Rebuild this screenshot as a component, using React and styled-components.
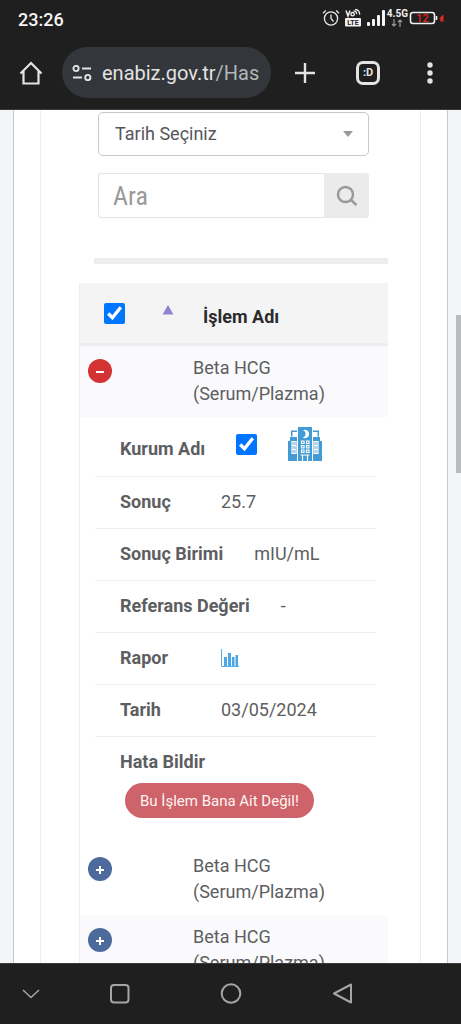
import { useState } from 'react';
import styled, { createGlobalStyle } from 'styled-components';

const DETAILS = [
  { label: 'Sonuç', value: '25.7' },
  { label: 'Sonuç Birimi', value: 'mIU/mL' },
  { label: 'Referans Değeri', value: '-' },
  { label: 'Rapor', chart: true },
  { label: 'Tarih', value: '03/05/2024' },
];

const ROWS = [1, 2, 3];

const StatusBar = () => (
  <Status>
    <Clock>23:26</Clock>
    <StatusIcons>
      <svg width="18" height="18" viewBox="0 0 18 18" fill="none" stroke="#e8e8e8" strokeWidth="1.3">
        <circle cx="9" cy="9.5" r="6.6" />
        <path d="M9 5.5v4l2.5 3M1 4.2 3.8 1.6M17 4.2l-2.8-2.6" />
      </svg>
      <svg width="18" height="18" viewBox="0 0 18 18" fill="none">
        <path d="M2 1.5 4 7l2-5.5" stroke="#f2f2f2" strokeWidth="1.5" />
        <circle cx="8.6" cy="5.2" r="1.7" stroke="#f2f2f2" strokeWidth="1.4" />
        <path d="M9.5 1.8c2 0 3.2 1.2 3.2 3.4M11 .3c3 .3 4.7 2 4.7 5.5" stroke="#f2f2f2" strokeWidth="1.2" />
        <rect x="1" y="9" width="16" height="8.5" rx="1" fill="#f2f2f2" />
        <text x="9" y="16" textAnchor="middle" fontSize="7" fontWeight="700" fill="#1f1f1f">LTE</text>
      </svg>
      <svg width="20" height="18" viewBox="0 0 20 18" fill="#f5f5f5">
        <rect x="1" y="13" width="3" height="4" rx="1" />
        <rect x="6" y="10" width="3" height="7" rx="1" />
        <rect x="11" y="6" width="3" height="11" rx="1" />
        <rect x="16" y="1" width="3" height="16" rx="1" />
      </svg>
      <Network>
        <b>4.5G</b>
        <svg width="12" height="8" viewBox="0 0 12 8" fill="none" stroke="#9a9a9a" strokeWidth="1.2">
          <path d="M3 0v7M1 5l2 2 2-2M9 8V1M7 3l2-2 2 2" />
        </svg>
      </Network>
      <svg width="35" height="14" viewBox="0 0 35 14" fill="none">
        <rect x="1.5" y="1.5" width="24" height="11" rx="2.5" stroke="#f0f0f0" strokeWidth="1.6" />
        <path d="M27.5 5v4" stroke="#f0f0f0" strokeWidth="1.6" />
        <text x="13.5" y="11" textAnchor="middle" fontSize="11" fontWeight="500" fill="#e0281c">12</text>
        <path d="M33.5 4 30 8h1.5l-.5 2.500h3.500V4z" fill="#e0281c" />
      </svg>
    </StatusIcons>
  </Status>
);

const BrowserBar = () => (
  <Toolbar>
    <IconButton aria-label="Ana sayfa">
      <svg width="24" height="24" viewBox="0 0 24 24" fill="none" stroke="#e3e3e3" strokeWidth="2.2">
        <path d="M1.5 12.5 12 2l10.5 10.5M4.5 10v12.5h15V10" />
      </svg>
    </IconButton>
    <Address>
      <svg width="20" height="16" viewBox="0 0 20 16" fill="none" stroke="#e3e3e3" strokeWidth="1.9">
        <circle cx="4" cy="3.5" r="2.6" />
        <path d="M10 3.5h9M1 12.5h9" />
        <circle cx="15.8" cy="12.5" r="2.6" />
      </svg>
      <Url>
        enabiz.gov.tr<span>/Has</span>
      </Url>
    </Address>
    <ToolbarActions>
      <IconButton aria-label="Yeni sekme">
        <svg width="22" height="22" viewBox="0 0 22 22" stroke="#e3e3e3" strokeWidth="2.4">
          <path d="M1 11h20M11 1v20" />
        </svg>
      </IconButton>
      <TabsButton aria-label="Sekmeler">:D</TabsButton>
      <IconButton aria-label="Menü">
        <svg width="20" height="22" viewBox="0 0 20 22" fill="#e3e3e3">
          <circle cx="10" cy="3" r="2.7" />
          <circle cx="10" cy="11" r="2.7" />
          <circle cx="10" cy="19" r="2.7" />
        </svg>
      </IconButton>
    </ToolbarActions>
  </Toolbar>
);

const HospitalIcon = () => (
  <svg width="34" height="35" viewBox="0 0 34 35" role="img" aria-label="Kurum">
    <g fill="#439bd3">
      <path d="M0 14h9v20H0zM25 14h9v20h-9z" />
      <path d="M10 0h14v34H10z" />
      <path d="M3 3.5h6V5H4.5v4.5H3zM31 3.5h-6V5h4.5v4.5H31z" />
      <path d="M2 10h7v4H2zM25 10h7v4h-7z" />
    </g>
    <path d="M15 3.2a4.2 4.2 0 1 1-.3 7.3 3.8 3.8 0 0 0 .3-7.3z" fill="#fff" />
    <g fill="none" stroke="#fff" strokeWidth="1.2">
      <path d="M13.5 14H16v2.5h-2.5zM18.5 14H21v2.5h-2.5zM13.5 18.5H16V21h-2.5zM18.5 18.5H21V21h-2.5zM13.5 23H16v2.5h-2.5zM18.5 23H21v2.5h-2.5z" />
      <path d="M4 14.5h4v4H4zM4 18.5h4v4H4zM4 22.5h4v4H4zM6 14.5v12" />
      <path d="M26 14.5h4v4h-4zM26 18.5h4v4h-4zM26 22.5h4v4h-4zM28 14.5v12" />
      <path d="M12.5 28h9M14.5 28v6.5M19.5 28v6.5" />
    </g>
  </svg>
);

const ChartIcon = () => (
  <svg width="18" height="18" viewBox="0 0 18 18">
    <path d="M.5 0v17.5H18" fill="none" stroke="#55aee6" />
    <path d="M3 8h3v9H3zM7 4h3v13H7zM11 8h2.5v9H11zM14.5 6H17v11h-2.5z" fill="#4ba6e2" />
  </svg>
);

const ResultDetails = () => (
  <DetailList>
    <DetailItem $first>
      <label htmlFor="kurum">Kurum Adı</label>
      <DetailValue>
        <Checkbox id="kurum" defaultChecked />
        <HospitalIcon />
      </DetailValue>
    </DetailItem>
    {DETAILS.map(({ label, value, chart }) => (
      <DetailItem key={label}>
        <b>{label}</b>
        <DetailValue>{chart ? <ChartIcon /> : value}</DetailValue>
      </DetailItem>
    ))}
    <DetailItem $last>
      <b>Hata Bildir</b>
      <ReportButton>Bu İşlem Bana Ait Değil!</ReportButton>
    </DetailItem>
  </DetailList>
);

const ResultRow = ({ striped, open, onToggle }) => (
  <>
    <Row $striped={striped}>
      <td>
        <ToggleButton $open={open} onClick={onToggle} aria-label="Detay">
          <svg width="10" height="10" viewBox="0 0 10 10" stroke="#fff" strokeWidth="2">
            <path d={open ? 'M1 6h8' : 'M1 6h8M5 2v8'} />
          </svg>
        </ToggleButton>
      </td>
      <td>
        Beta HCG
        <br />
        (Serum/Plazma)
      </td>
    </Row>
    {open && (
      <tr>
        <DetailCell colSpan={2}>
          <ResultDetails />
        </DetailCell>
      </tr>
    )}
  </>
);

export default function App() {
  const [openRow, setOpenRow] = useState(1);

  return (
    <Screen>
      <GlobalStyle />
      <StatusBar />
      <BrowserBar />
      <Viewport>
        <Sheet>
          <Panel>
            <Filters>
              <SelectBox>
                <select aria-label="Tarih" defaultValue="">
                  <option value="">Tarih Seçiniz</option>
                </select>
                <svg width="10" height="6" viewBox="0 0 10 6" fill="#999">
                  <path d="M0 0h10L5 6z" />
                </svg>
              </SelectBox>
              <SearchBox>
                <input type="text" placeholder="Ara" aria-label="Ara" />
                <button aria-label="Ara">
                  <svg width="22" height="22" viewBox="0 0 22 22" fill="none" stroke="#999" strokeWidth="2.4">
                    <circle cx="9.5" cy="9.5" r="7.5" />
                    <path d="m15 15 5.5 5" />
                  </svg>
                </button>
              </SearchBox>
            </Filters>
            <Divider />
            <Table>
              <thead>
                <tr>
                  <th>
                    <HeadTools>
                      <Checkbox aria-label="Tümünü seç" defaultChecked />
                      <svg width="12" height="16" viewBox="0 0 12 16" fill="#8f83d3">
                        <path d="M6 2l5.5 9.5H.5z" />
                      </svg>
                    </HeadTools>
                  </th>
                  <th>İşlem Adı</th>
                </tr>
              </thead>
              <tbody>
                {ROWS.map((id) => (
                  <ResultRow
                    key={id}
                    striped={id % 2 === 1}
                    open={openRow === id}
                    onToggle={() => setOpenRow(openRow === id ? null : id)}
                  />
                ))}
              </tbody>
            </Table>
          </Panel>
        </Sheet>
        <ScrollThumb />
      </Viewport>
      <NavBar>
        <IconButton aria-label="Gizle">
          <svg width="22" height="22" viewBox="0 0 22 22" fill="none" stroke="#a5a5a5" strokeWidth="1.6">
            <path d="m3 7 8 7.5L19 7" />
          </svg>
        </IconButton>
        <NavGroup>
          <IconButton aria-label="Son uygulamalar">
            <svg width="22" height="22" viewBox="0 0 22 22" fill="none" stroke="#a5a5a5" strokeWidth="2">
              <rect x="2" y="2" width="17.5" height="17.5" rx="3" />
            </svg>
          </IconButton>
          <IconButton aria-label="Ana ekran">
            <svg width="22" height="22" viewBox="0 0 22 22" fill="none" stroke="#a5a5a5" strokeWidth="2">
              <circle cx="11" cy="10.5" r="9.3" />
            </svg>
          </IconButton>
          <IconButton aria-label="Geri">
            <svg width="22" height="22" viewBox="0 0 22 22" fill="none" stroke="#a5a5a5" strokeWidth="2" strokeLinejoin="round">
              <path d="M20 1.5v18l-17-9z" />
            </svg>
          </IconButton>
        </NavGroup>
      </NavBar>
    </Screen>
  );
}

const GlobalStyle = createGlobalStyle`
  * {
    box-sizing: border-box;
  }
  body {
    margin: 0;
    font-family: Roboto, "Liberation Sans", sans-serif;
    color: #5d5e61;
  }
  button, input, select {
    margin: 0;
    font-family: inherit;
  }
  svg {
    display: block;
    flex-shrink: 0;
  }
`;

const Screen = styled.div`
  display: flex;
  flex-direction: column;
  height: 100vh;
  overflow: hidden;
`;

const Status = styled.div`
  display: flex;
  justify-content: space-between;
  align-items: center;
  height: 38px;
  padding: 0 17px 2px 18px;
  background: #1f1f1f;
`;

const Clock = styled.span`
  padding-top: 2px;
  font-size: 18px;
  font-weight: 500;
  color: #f5f5f5;
`;

const StatusIcons = styled.div`
  display: flex;
  align-items: center;
  gap: 4px;
`;

const Network = styled.div`
  display: flex;
  flex-direction: column;
  align-items: center;
  margin: 0 -3px;
  b {
    font-size: 10px;
    line-height: 10px;
    color: #f0f0f0;
  }
`;

const Toolbar = styled.header`
  display: flex;
  align-items: center;
  height: 72px;
  padding: 0 21px 2px 19px;
  background: #1f1f1f;
  border-bottom: 1px solid #3a3a3a;
`;

const IconButton = styled.button`
  display: flex;
  padding: 0;
  border: none;
  background: none;
  cursor: pointer;
`;

const Address = styled.div`
  display: flex;
  flex: 1;
  align-items: center;
  gap: 10px;
  min-width: 0;
  height: 51px;
  margin: 0 23px 0 19px;
  padding: 0 9px 0 10px;
  border-radius: 26px;
  background: #33363a;
`;

const Url = styled.span`
  overflow: hidden;
  white-space: nowrap;
  font-size: 20px;
  color: #e3e3e3;
  span {
    color: #b4b6b9;
  }
`;

const ToolbarActions = styled.div`
  display: flex;
  align-items: center;
  gap: 40px;
`;

const TabsButton = styled.button`
  width: 24px;
  height: 24px;
  padding: 0;
  border: 3px solid #e3e3e3;
  border-radius: 7px;
  background: none;
  color: #e3e3e3;
  font-size: 11px;
  font-weight: 700;
  cursor: pointer;
`;

const Viewport = styled.main`
  position: relative;
  flex: 1;
  min-height: 0;
  overflow: hidden;
  padding: 0 13px;
  background: #f3f5f8;
`;

const Sheet = styled.div`
  padding: 0 26px;
  border: solid #c6c9cb;
  border-width: 0 1px;
  background: #fff;
`;

const Panel = styled.section`
  padding: 2px 32px 0 38px;
  border: solid #eeeeee;
  border-width: 0 1px;
`;

const Filters = styled.div`
  display: flex;
  flex-direction: column;
  gap: 17px;
  padding: 0 19px;
`;

const SelectBox = styled.div`
  display: grid;
  align-items: center;
  select,
  svg {
    grid-area: 1 / 1;
  }
  select {
    appearance: none;
    height: 44px;
    padding: 0 16px 2px;
    border: 1px solid #c5c8cb;
    border-radius: 5px;
    background: #fff;
    color: #55565a;
    font-size: 18px;
  }
  svg {
    justify-self: end;
    margin-right: 16px;
    pointer-events: none;
  }
`;

const SearchBox = styled.div`
  display: flex;
  height: 45px;
  input {
    flex: 1;
    min-width: 0;
    padding: 0 14px;
    border: 1px solid #e4e4e4;
    border-right: none;
    border-radius: 3px 0 0 3px;
    font-family: "Roboto Condensed", Roboto, sans-serif;
    font-size: 26px;
  }
  input::placeholder {
    color: #999;
  }
  button {
    display: flex;
    align-items: center;
    justify-content: center;
    width: 45px;
    padding: 0;
    border: none;
    border-radius: 0 3px 3px 0;
    background: #ebebeb;
    cursor: pointer;
  }
`;

const Divider = styled.hr`
  height: 6px;
  margin: 40px 0 19px 15px;
  border: none;
  background: #ededed;
`;

const Table = styled.table`
  width: 100%;
  border-collapse: separate;
  border-spacing: 0;
  border-left: 1px solid #eeeff1;
  font-size: 18px;
  line-height: 26px;
  th {
    height: 63px;
    padding: 8px 20px 0;
    border-bottom: 3px solid #ebedef;
    background: #f4f4f4;
    color: #2b2b2d;
    text-align: left;
  }
  th:first-child {
    width: 103px;
    padding: 0 9px 0 24px;
  }
`;

const HeadTools = styled.div`
  display: flex;
  justify-content: space-between;
`;

const Checkbox = styled.input.attrs({ type: 'checkbox' })`
  width: 21px;
  height: 21px;
  accent-color: #0075ff;
`;

const Row = styled.tr`
  background: ${({ $striped }) => ($striped ? '#fafafc' : '#fff')};
  td {
    padding: 9px 10px 10px;
    vertical-align: top;
  }
  td:first-child {
    padding: 13px 8px;
  }
`;

const ToggleButton = styled.button`
  display: flex;
  align-items: center;
  justify-content: center;
  width: 24px;
  height: 24px;
  padding: 0;
  border: none;
  border-radius: 50%;
  background: ${({ $open }) => ($open ? '#d33333' : '#4c6a9b')};
  cursor: pointer;
`;

const DetailCell = styled.td`
  padding: 10px 12px 0 15px;
`;

const DetailList = styled.ul`
  margin: 0;
  padding: 0;
  list-style: none;
`;

const DetailItem = styled.li`
  display: flex;
  flex-direction: ${({ $last }) => ($last ? 'column' : 'row')};
  align-items: ${({ $last }) => ($last ? 'flex-start' : 'flex-end')};
  gap: ${({ $last }) => ($last ? '8px' : '31px')};
  padding: ${({ $first, $last }) => ($first ? '0 25px 14px' : $last ? '12px 25px 26px' : '12px 25px 13px')};
  border-bottom: ${({ $last }) => ($last ? 'none' : '1px solid #ededee')};
  b,
  label {
    min-width: 70px;
    font-weight: 700;
  }
`;

const DetailValue = styled.div`
  display: flex;
  align-items: center;
  gap: 31px;
  min-height: 26px;
`;

const ReportButton = styled.button`
  height: 35px;
  margin-left: 5px;
  padding: 0 15px;
  border: none;
  border-radius: 18px;
  background: #ce636b;
  color: #fff3f0;
  font-size: 15px;
  cursor: pointer;
`;

// overlay scrollbar of the mobile browser
const ScrollThumb = styled.div`
  position: absolute;
  top: 24%;
  right: 0;
  width: 5px;
  height: 158px;
  background: #b9bbbd;
`;

const NavBar = styled.nav`
  display: grid;
  grid-template-columns: 1fr auto 1fr;
  align-items: center;
  height: 61px;
  padding: 0 20px;
  border-top: 1px solid #3a3a3a;
  background: #1f1f1f;
`;

const NavGroup = styled.div`
  display: flex;
  gap: 89px;
`;
